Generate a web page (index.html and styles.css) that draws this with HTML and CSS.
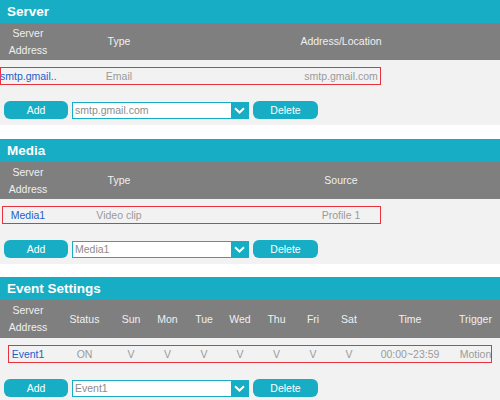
FILE: index.html
```html
<!DOCTYPE html>
<html>
<head>
<meta charset="utf-8">
<link rel="stylesheet" href="styles.css">
</head>
<body>
<section class="panel">
  <h2 class="title">Server</h2>
  <div class="head cols-srv">
    <div>Server<br>Address</div><div>Type</div><div>Address/Location</div>
  </div>
  <div class="body">
    <div class="rowwrap">
      <div class="box box-srv"></div>
      <div class="data cols-srv">
        <div class="link">smtp.gmail..</div><div>Email</div><div>smtp.gmail.com</div>
      </div>
    </div>
    <div class="controls">
      <button class="btn">Add</button>
      <div class="field"><span class="val">smtp.gmail.com</span><span class="arrow"><svg width="11" height="7" viewBox="0 0 11 7"><path d="M1 1.2 L5.5 5.5 L10 1.2" fill="none" stroke="#fff" stroke-width="2"/></svg></span></div>
      <button class="btn">Delete</button>
    </div>
  </div>
</section>

<section class="panel panel-2">
  <h2 class="title">Media</h2>
  <div class="head cols-srv">
    <div>Server<br>Address</div><div>Type</div><div>Source</div>
  </div>
  <div class="body">
    <div class="rowwrap">
      <div class="box box-media"></div>
      <div class="data cols-srv">
        <div class="link">Media1</div><div>Video clip</div><div>Profile 1</div>
      </div>
    </div>
    <div class="controls">
      <button class="btn">Add</button>
      <div class="field"><span class="val">Media1</span><span class="arrow"><svg width="11" height="7" viewBox="0 0 11 7"><path d="M1 1.2 L5.5 5.5 L10 1.2" fill="none" stroke="#fff" stroke-width="2"/></svg></span></div>
      <button class="btn">Delete</button>
    </div>
  </div>
</section>

<section class="panel panel-3">
  <h2 class="title">Event Settings</h2>
  <div class="head head-tall cols-evt">
    <div>Server<br>Address</div><div>Status</div><div>Sun</div><div>Mon</div><div>Tue</div><div>Wed</div><div>Thu</div><div>Fri</div><div>Sat</div><div>Time</div><div>Trigger</div>
  </div>
  <div class="body">
    <div class="rowwrap">
      <div class="box box-evt"></div>
      <div class="data cols-evt">
        <div class="link">Event1</div><div>ON</div><div>V</div><div>V</div><div>V</div><div>V</div><div>V</div><div>V</div><div>V</div><div>00:00~23:59</div><div>Motion</div>
      </div>
    </div>
    <div class="controls">
      <button class="btn">Add</button>
      <div class="field"><span class="val">Event1</span><span class="arrow"><svg width="11" height="7" viewBox="0 0 11 7"><path d="M1 1.2 L5.5 5.5 L10 1.2" fill="none" stroke="#fff" stroke-width="2"/></svg></span></div>
      <button class="btn">Delete</button>
    </div>
  </div>
</section>
</body>
</html>
```

FILE: styles.css
```css
html, body {
  margin: 0;
  padding: 0;
  background: #ffffff;
  font-family: "Liberation Sans", Arial, sans-serif;
  font-size: 10.5px;
}

.panel-2 { margin-top: 14px; }
.panel-3 { margin-top: 13px; }

.title {
  margin: 0;
  height: 23px;
  line-height: 23px;
  padding-left: 7px;
  background: #17adc4;
  color: #ffffff;
  font-size: 13.5px;
  font-weight: bold;
}

.head {
  display: grid;
  align-items: center;
  height: 37px;
  background: #7f7f7f;
  color: #f0f0f0;
  line-height: 17px;
  text-align: center;
}
.head-tall { height: 38px; }

.cols-srv { grid-template-columns: 56px 126px 318px; }
.cols-evt { grid-template-columns: 56px 57px 36px 37px 36px 36px 37px 36px 36px 86px 45px 2px; }

.body {
  background: #f2f2f2;
  padding: 7px 0 6px;
}

.rowwrap {
  display: grid;
}
.rowwrap > * {
  grid-area: 1 / 1;
}

.box {
  box-sizing: border-box;
  height: 18px;
  border: 1px solid #e8333d;
}
.box-srv { width: 381px; margin-left: 0; }
.box-media { width: 379px; margin-left: 2px; }
.box-evt { width: 484px; margin-left: 8px; }

.data {
  display: grid;
  align-items: center;
  height: 18px;
  color: #9a9a9a;
  text-align: center;
  white-space: nowrap;
}
.data .link { color: #1d5fc9; }

.controls {
  display: flex;
  align-items: center;
  gap: 4px;
  margin-top: 16px;
  padding-left: 4px;
  height: 18px;
}

.btn {
  box-sizing: border-box;
  width: 64px;
  height: 18px;
  padding: 0;
  border: none;
  border-radius: 6px;
  background: #17adc4;
  color: #ffffff;
  font-family: "Liberation Sans", Arial, sans-serif;
  font-size: 10.5px;
}
.btn:last-child { width: 65px; }

.field {
  box-sizing: border-box;
  display: flex;
  width: 177px;
  height: 17px;
  border: 1px solid #17adc4;
  background: #ffffff;
}
.val {
  flex: 1;
  padding-left: 2px;
  line-height: 15px;
  color: #8c8c8c;
}
.arrow {
  display: flex;
  align-items: center;
  justify-content: center;
  width: 17px;
  background: #17adc4;
}
```
